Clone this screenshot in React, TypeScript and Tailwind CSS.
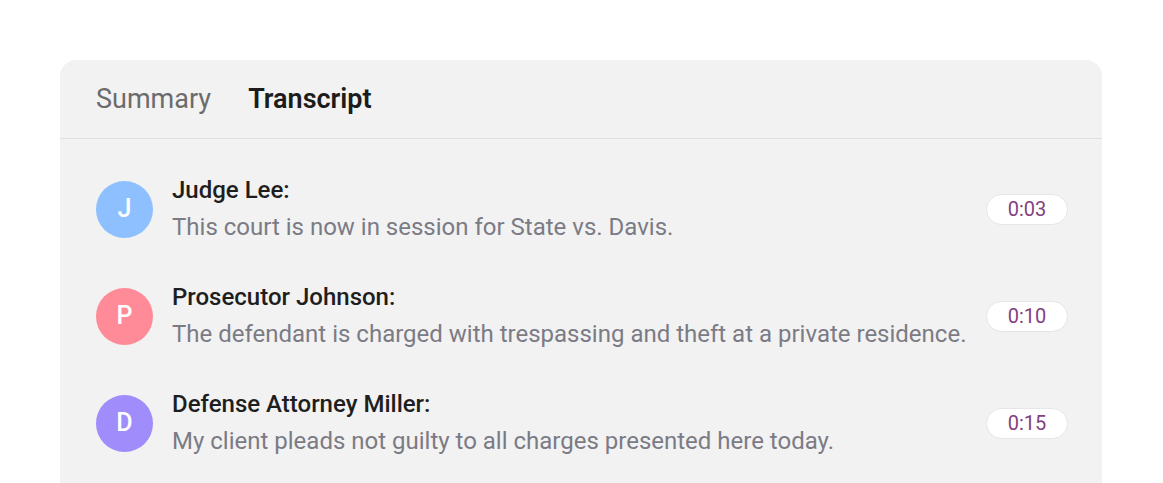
import React from "react";

const rows = [
  { initial: "J", color: "bg-[#8ec0ff]", name: "Judge Lee:", text: "This court is now in session for State vs. Davis.", time: "0:03" },
  { initial: "P", color: "bg-[#ff8b98]", name: "Prosecutor Johnson:", text: "The defendant is charged with trespassing and theft at a private residence.", time: "0:10" },
  { initial: "D", color: "bg-[#a08cfa]", name: "Defense Attorney Miller:", text: "My client pleads not guilty to all charges presented here today.", time: "0:15" },
];

export default function App() {
  return (
    <div className="w-[1163px] h-[483px] bg-white overflow-hidden pt-[60px] pl-[60px]" style={{ fontFamily: "Roboto, 'Noto Sans', sans-serif" }}>
      <div className="w-[1042px] h-[460px] bg-[#f2f2f2] rounded-t-[16px]">
        <div className="h-[79px] border-b border-[#e0e0e0] flex items-center gap-[37px] pl-[36px]">
          <span className="text-[27px] text-[#6b6b6b]">Summary</span>
          <span className="text-[27px] font-semibold text-[#1c1c1c]">Transcript</span>
        </div>
        <div className="flex flex-col gap-[41px] pt-[37px] pl-[36px] pr-[34px]">
          {rows.map((r) => (
            <div key={r.initial} className="flex items-center">
              <div className={`w-[57px] h-[57px] rounded-full ${r.color} flex items-center justify-center text-white text-[25px] font-medium shrink-0`}>
                {r.initial}
              </div>
              <div className="flex flex-col gap-[8px] ml-[19px] flex-1">
                <div className="text-[24px] leading-[28px] font-medium text-[#1e1e1e]">{r.name}</div>
                <div className="text-[24px] leading-[30px] text-[#7b7b85]">{r.text}</div>
              </div>
              <div className="w-[82px] h-[31px] rounded-full bg-white border border-[#e6e6e6] flex items-center justify-center text-[20px] text-[#833f80] shrink-0">
                {r.time}
              </div>
            </div>
          ))}
        </div>
      </div>
    </div>
  );
}
